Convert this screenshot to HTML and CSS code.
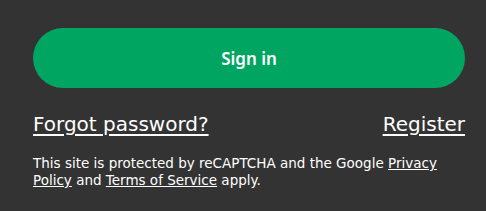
FILE: index.html
```html
<!DOCTYPE html>
<html lang="en">

<head>
    <meta charset="UTF-8" />
    <meta name="viewport" content="width=device-width, initial-scale=1.0" />
    <title>Sign in</title>
    <link rel="stylesheet" href="styles.css">
</head>

<body>
    <div class="login-footer">
        <button class="btn-signin" type="submit">Sign in</button>

        <div class="login-links">
            <a href="#" class="link-big">Forgot password?</a>
            <a href="#" class="link-big">Register</a>
        </div>

        <p class="recaptcha-note">
            This site is protected by reCAPTCHA and the Google <a href="#">Privacy Policy</a> and <a href="#">Terms of Service</a> apply.
        </p>
    </div>
</body>

</html>
```

FILE: styles.css
```css
body {
    margin: 0;
    background: #333333;
    color: #ffffff;
    font-family: "DejaVu Sans", sans-serif;
}

.login-footer {
    width: 432px;
    margin-left: 33px;
    padding-top: 28px;
    display: flex;
    flex-direction: column;
}

.btn-signin {
    height: 60px;
    border: none;
    border-radius: 30px;
    background: #00a562;
    color: #ffffff;
    font-family: "Noto Sans", sans-serif;
    font-size: 17px;
    font-weight: 600;
    cursor: pointer;
}

.login-links {
    display: flex;
    justify-content: space-between;
    margin-top: 22px;
}

.link-big {
    color: #ffffff;
    font-size: 20px;
    line-height: 28px;
    text-decoration: underline;
    text-underline-offset: 3px;
}

.recaptcha-note {
    width: 420px;
    margin: 17px 0 0;
    font-size: 13.5px;
    line-height: 17px;
}

.recaptcha-note a {
    color: #ffffff;
}
```
